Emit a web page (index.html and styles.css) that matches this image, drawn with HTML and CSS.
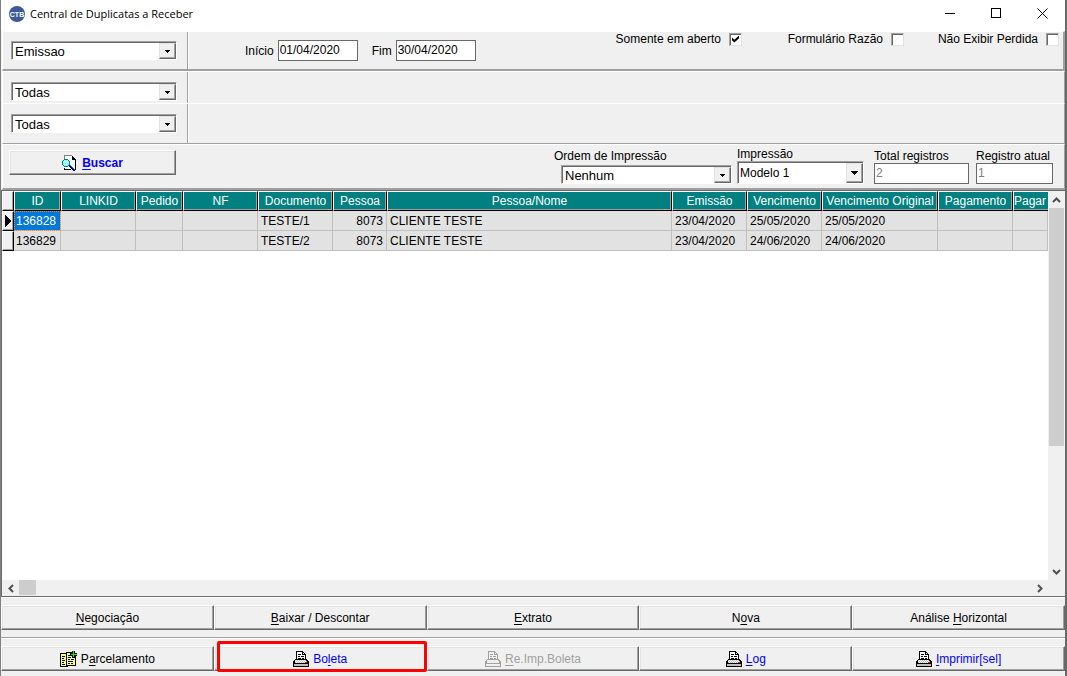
FILE: index.html
```html
<!DOCTYPE html>
<html lang="pt-BR">
<head>
    <meta charset="UTF-8">
    <meta name="viewport" content="width=device-width, initial-scale=1.0">
    <title>Central de Duplicatas a Receber</title>
    <link rel="stylesheet" href="styles.css">
</head>
<body>
    <!-- Ícones reutilizados nos botões -->
    <svg class="sprites" aria-hidden="true">
        <symbol id="printer" viewBox="0 0 16 16">
            <path class="tray" d="M2 8H14V9H15V10H16V16H0V10H1V9H2z"/>
            <path class="tray-top" d="M3 9H13V10H14V12H2V10H3z"/>
            <path class="dots" d="M2 9.500H14M3 10.500H15M2 11.500H14"/>
            <path class="tray-base" d="M1 13H15V15H1z"/>
            <path class="edge" d="M3 0H10V1H11V2H12V3H13V9H3z"/>
            <path class="paper" d="M4 1H9V4H12V8H4z"/>
            <path class="paper" d="M10 2H11V3H10z"/>
            <path class="edge" d="M5 3H8V4H5zM5 5H7V6H5zM8 5H11V6H8zM5 7H8V8H5zM9 7H11V8H9z"/>
            <path class="led" d="M12 11H14V12H12z"/>
        </symbol>
        <symbol id="arrow" viewBox="0 0 7 4">
            <path d="M0 0H7V1H6V2H5V3H4V4H3V3H2V2H1V1H0z"/>
        </symbol>
    </svg>

    <div class="window">
        <header class="titlebar">
            <svg class="logo" viewBox="0 0 16 16">
                <circle cx="8" cy="8" r="8" fill="#3b5998"/>
                <text x="8" y="11" text-anchor="middle">CTB</text>
            </svg>
            <h1>Central de Duplicatas a Receber</h1>
            <button class="win-btn" aria-label="Minimizar"><svg viewBox="0 0 11 11"><path d="M0 5.500H10"/></svg></button>
            <button class="win-btn" aria-label="Maximizar"><svg viewBox="0 0 11 11"><path d="M.5.5H9.500V9.500H.5z"/></svg></button>
            <button class="win-btn" aria-label="Fechar"><svg class="smooth" viewBox="0 0 11 11"><path d="M.5.5L10.500 10.500M10.500.5L.5 10.500"/></svg></button>
        </header>

        <section class="filter filter-date">
            <div class="filter-type">
                <div class="combo">
                    <select aria-label="Tipo de data"><option>Emissao</option></select>
                    <span class="drop"><svg><use href="#arrow"/></svg></span>
                </div>
            </div>
            <div class="period">
                <label for="inicio">Início</label>
                <input type="text" id="inicio" value="01/04/2020">
                <label for="fim" class="label-fim">Fim</label>
                <input type="text" id="fim" value="30/04/2020">
            </div>
            <div class="checks">
                <label>Somente em aberto <input type="checkbox" checked></label>
                <label>Formulário Razão <input type="checkbox"></label>
                <label>Não Exibir Perdida <input type="checkbox"></label>
            </div>
        </section>

        <section class="filter filter-client">
            <div class="filter-type">
                <div class="combo">
                    <select aria-label="Filtro 1"><option>Todas</option></select>
                    <span class="drop"><svg><use href="#arrow"/></svg></span>
                </div>
            </div>
        </section>

        <section class="filter filter-account">
            <div class="filter-type">
                <div class="combo">
                    <select aria-label="Filtro 2"><option>Todas</option></select>
                    <span class="drop"><svg><use href="#arrow"/></svg></span>
                </div>
            </div>
        </section>

        <section class="filter search">
            <button class="btn btn-search">
                <svg class="icon" viewBox="0 0 16 16">
                    <path d="M3 1H10V5H13V14H3z" fill="#fff"/>
                    <path d="M2 0H10V1H3V4H2z" fill="#808080"/>
                    <path d="M10 1H11V2H12V3H13V4H14V15H11V14H13V5H10zM2 13H3V14H9V15H2z" fill="#000"/>
                    <path d="M2 4H6V5H7V6H8V10H7V11H6V12H2V11H1V10H0V6H1V5H2z" fill="#008080"/>
                    <path d="M2 5H6V6H7V10H6V11H2V10H1V6H2z" fill="#7fffff"/>
                    <path d="M2 6H3V7H2zM4 6H5V7H4zM3 7H4V8H3zM5 7H6V8H5zM2 8H3V9H2zM4 8H5V9H4z" fill="#fff"/>
                    <path d="M7 10H9V11H10V12H11V13H12V14H13V16H11V15H10V14H9V13H8V12H7z" fill="#000080"/>
                    <path d="M8 10H9V11H10V12H11V13H12V14H13V15H12V14H11V13H10V12H9V11H8z" fill="#0080ff"/>
                </svg>
                <span><u>B</u>uscar</span>
            </button>
            <div class="field field-order">
                <label for="ordem">Ordem de Impressão</label>
                <div class="combo">
                    <select id="ordem"><option>Nenhum</option></select>
                    <span class="drop"><svg><use href="#arrow"/></svg></span>
                </div>
            </div>
            <div class="field field-model">
                <label for="impressao">Impressão</label>
                <div class="combo combo-tall">
                    <select id="impressao"><option>Modelo 1</option></select>
                    <span class="drop"><svg><use href="#arrow"/></svg></span>
                </div>
            </div>
            <div class="field field-total">
                <label for="total">Total registros</label>
                <input type="text" id="total" value="2" disabled>
            </div>
            <div class="field field-current">
                <label for="atual">Registro atual</label>
                <input type="text" id="atual" value="1" disabled>
            </div>
        </section>

        <main class="grid">
            <div class="grid-body">
                <div class="grid-view">
                    <table>
                        <colgroup>
                            <col class="c-mark"><col class="c-small"><col class="c-date"><col class="c-small">
                            <col class="c-date"><col class="c-date"><col class="c-person"><col>
                            <col class="c-date"><col class="c-date"><col class="c-original"><col class="c-date">
                            <col class="c-cut">
                        </colgroup>
                        <thead>
                            <tr>
                                <th class="mark"></th>
                                <th>ID</th>
                                <th>LINKID</th>
                                <th>Pedido</th>
                                <th>NF</th>
                                <th>Documento</th>
                                <th>Pessoa</th>
                                <th>Pessoa/Nome</th>
                                <th>Emissão</th>
                                <th>Vencimento</th>
                                <th>Vencimento Original</th>
                                <th>Pagamento</th>
                                <th class="cut">Pagar</th>
                            </tr>
                        </thead>
                        <tbody>
                            <tr>
                                <td class="mark"><svg viewBox="0 0 6 12"><path d="M0 0L6 6L0 12z"/></svg></td>
                                <td class="id selected">136828</td>
                                <td></td>
                                <td></td>
                                <td></td>
                                <td>TESTE/1</td>
                                <td class="num">8073</td>
                                <td>CLIENTE TESTE</td>
                                <td>23/04/2020</td>
                                <td>25/05/2020</td>
                                <td>25/05/2020</td>
                                <td></td>
                                <td></td>
                            </tr>
                            <tr>
                                <td class="mark"></td>
                                <td class="id">136829</td>
                                <td></td>
                                <td></td>
                                <td></td>
                                <td>TESTE/2</td>
                                <td class="num">8073</td>
                                <td>CLIENTE TESTE</td>
                                <td>23/04/2020</td>
                                <td>24/06/2020</td>
                                <td>24/06/2020</td>
                                <td></td>
                                <td></td>
                            </tr>
                        </tbody>
                    </table>
                </div>
                <div class="vscroll">
                    <button aria-label="Acima"><svg viewBox="0 0 9 6"><path d="M1 5L4.500 1.500L8 5"/></svg></button>
                    <div class="track"><div class="thumb"></div></div>
                    <button aria-label="Abaixo"><svg viewBox="0 0 9 6"><path d="M1 1L4.500 4.500L8 1"/></svg></button>
                </div>
            </div>
            <div class="hscroll">
                <button aria-label="Esquerda"><svg viewBox="0 0 6 9"><path d="M5 1L1.500 4.500L5 8"/></svg></button>
                <div class="track"><div class="thumb"></div></div>
                <button aria-label="Direita"><svg viewBox="0 0 6 9"><path d="M1 1L4.500 4.500L1 8"/></svg></button>
            </div>
        </main>

        <footer class="actions">
            <div class="action-row">
                <button class="btn"><span><u>N</u>egociação</span></button>
                <button class="btn"><span><u>B</u>aixar / Descontar</span></button>
                <button class="btn"><span><u>E</u>xtrato</span></button>
                <button class="btn"><span>N<u>o</u>va</span></button>
                <button class="btn"><span>Análise <u>H</u>orizontal</span></button>
            </div>
            <div class="action-row">
                <button class="btn">
                    <svg class="icon icon-notes" viewBox="0 0 17 16">
                        <path d="M0 2H8V16H0z" fill="#000"/>
                        <path d="M1 3H7V15H1z" fill="#ffff66"/>
                        <path d="M2 5H5V6H2zM2 7H4V8H2zM2 9H5V10H2zM2 11H4V12H2zM2 13H5V14H2z" fill="#000080"/>
                        <path d="M6 1H14V3H16V15H6z" fill="#000"/>
                        <path d="M7 2H13V4H15V14H7z" fill="#ffff66"/>
                        <path d="M8 4H10V5H8zM8 6H11V7H8zM8 8H10V9H8zM11 8H14V9H11zM8 10H13V11H8zM8 12H10V13H8zM11 12H13V13H11z" fill="#000080"/>
                        <path d="M12 0H15V2H17V5H15V7H12V5H10V2H12z" fill="#000"/>
                        <path d="M13 0H14V3H17V4H14V6H13V4H11V3H13z" fill="#00ff00"/>
                    </svg>
                    <span>P<u>a</u>rcelamento</span>
                </button>
                <button class="btn link highlight">
                    <svg class="icon"><use href="#printer"/></svg>
                    <span>Bo<u>l</u>eta</span>
                </button>
                <button class="btn" disabled>
                    <svg class="icon icon-off"><use href="#printer"/></svg>
                    <span><u>R</u>e.Imp.Boleta</span>
                </button>
                <button class="btn link">
                    <svg class="icon"><use href="#printer"/></svg>
                    <span><u>L</u>og</span>
                </button>
                <button class="btn link">
                    <svg class="icon"><use href="#printer"/></svg>
                    <span><u>I</u>mprimir[sel]</span>
                </button>
            </div>
        </footer>
    </div>
</body>
</html>
```
FILE: styles.css
```css
* {
    box-sizing: border-box;
}
body {
    margin: 0;
    background-color: #f0f0f0;
    font-family: "Liberation Sans", Arial, sans-serif;
    font-size: 12px;
    line-height: 14px;
    color: #000;
}
button, input, select {
    font: inherit;
    color: inherit;
    margin: 0;
    border-radius: 0;
}
svg {
    display: block;
    shape-rendering: crispEdges;
}
.sprites {
    position: absolute;
    width: 0;
    height: 0;
}
.window {
    display: flex;
    flex-direction: column;
    height: 100vh;
    border-left: 1px solid #808080;
    border-right: 2px solid #696969;
}

/* Barra de título */
.titlebar {
    display: flex;
    align-items: center;
    height: 31px;
    padding: 0 0 4px 8px;
    background-color: #fff;
}
.titlebar h1 {
    flex: 1;
    margin: 0 0 0 5px;
    font: 11px/16px "Open Sans", "Noto Sans", sans-serif;
}
.logo {
    width: 16px;
    height: 16px;
    shape-rendering: auto;
}
.logo text {
    font: bold 7px "Liberation Sans", Arial, sans-serif;
    fill: #fff;
}
.win-btn {
    display: flex;
    align-items: center;
    justify-content: center;
    width: 46px;
    height: 26px;
    padding: 0;
    border: none;
    background: none;
}
.win-btn svg {
    width: 11px;
    height: 11px;
    fill: none;
    stroke: #000;
}
.win-btn .smooth {
    shape-rendering: auto;
}

/* Filtros */
.filter {
    display: flex;
    margin: 0 0 0 1px;
    border: 1px solid #fff;
    border-right-color: #a0a0a0;
    border-bottom: 0;
}
.filter-type {
    width: 185px;
    padding: 9px 0 0 8px;
    border-right: 1px solid #a0a0a0;
    box-shadow: 1px 0 #fff;
}
.filter-date {
    height: 40px;
    border-right-width: 2px;
    border-bottom: 2px solid #a0a0a0;
}
.filter-client {
    height: 32px;
}
.filter-client .filter-type {
    padding-top: 10px;
}
.filter-account {
    height: 41px;
    border-bottom: 1px solid #a0a0a0;
}
.filter-account .filter-type {
    padding-top: 10px;
}
.combo {
    position: relative;
    width: 166px;
    height: 19px;
    border: 1px solid #a0a0a0;
    border-right-color: #fff;
    border-bottom-color: #fff;
    box-shadow: inset 1px 1px #696969;
    background-color: #fff;
}
.combo select {
    display: block;
    width: 100%;
    height: 17px;
    padding: 3px 20px 0 3px;
    border: none;
    background: none;
    font-size: 13px;
    line-height: 14px;
    appearance: none;
}
.drop {
    position: absolute;
    top: 1px;
    right: 0;
    bottom: 0;
    display: flex;
    align-items: center;
    justify-content: center;
    width: 17px;
    border: 1px solid #e3e3e3;
    border-right-color: #696969;
    border-bottom-color: #696969;
    box-shadow: inset -1px -1px #a0a0a0;
    background-color: #f0f0f0;
    pointer-events: none;
}
.drop svg {
    width: 5px;
    height: 3px;
}
.combo-tall {
    height: 23px;
}
.combo-tall select {
    height: 21px;
    padding: 0 20px 0 2px;
    font-size: 12px;
}
.combo-tall .drop svg {
    width: 7px;
    height: 4px;
}
input[type="text"] {
    height: 21px;
    padding: 0 1px 2px;
    border: 1px solid #696969;
    background-color: #fff;
}
input[type="text"]:disabled {
    color: #808080;
}
.period {
    display: flex;
    align-items: center;
    align-self: flex-start;
    gap: 4px;
    padding: 8px 0 0 57px;
}
.period input {
    width: 80px;
}
.label-fim {
    margin-left: 10px;
}
.checks {
    display: grid;
    grid-template-columns: 128px 162px 155px;
    align-self: flex-start;
    margin-left: auto;
    padding-right: 4px;
}
.checks label {
    display: flex;
    align-items: center;
    justify-content: flex-end;
    gap: 8px;
}
.checks input {
    display: flex;
    align-items: center;
    justify-content: center;
    width: 13px;
    height: 13px;
    border: 1px solid #a0a0a0;
    border-right-color: #e3e3e3;
    border-bottom-color: #e3e3e3;
    box-shadow: inset 1px 1px #696969;
    background-color: #fff;
    appearance: none;
}
.checks input:checked::before {
    content: "";
    width: 7px;
    height: 7px;
    background-color: #000;
    clip-path: polygon(0 30%, 35% 60%, 100% 0, 100% 38%, 35% 100%, 0 68%);
}

/* Busca e impressão */
.search {
    align-items: flex-end;
    height: 46px;
    padding: 0 11px 4px 6px;
    border-bottom: 2px solid #a0a0a0;
}
.btn {
    display: flex;
    align-items: center;
    justify-content: center;
    gap: 4px;
    padding: 0;
    border: 1px solid #fff;
    border-right-color: #696969;
    border-bottom-color: #696969;
    box-shadow: inset -1px -1px #a0a0a0, inset 1px 1px #e3e3e3;
    background-color: #f0f0f0;
}
.btn:disabled {
    color: #a0a0a0;
}
.btn u {
    text-underline-offset: 2px;
}
.btn-search {
    align-self: flex-start;
    width: 167px;
    height: 25px;
    margin: 5px auto 0 0;
    color: #0000ff;
    font-weight: bold;
}
.icon {
    width: 16px;
    height: 16px;
}
.icon-notes {
    width: 17px;
}
.field {
    display: flex;
    flex-direction: column;
}
.field-order {
    width: 178px;
}
.field-order .combo {
    width: 171px;
    margin: 2px 0 0 7px;
}
.field-model {
    width: 127px;
    margin: 0 10px 0 5px;
}
.field-model .combo {
    width: auto;
}
.field-total {
    width: 95px;
    margin-right: 7px;
}
.field-current {
    width: 77px;
}
.field label {
    white-space: nowrap;
}

/* Grade de duplicatas */
.grid {
    display: flex;
    flex: 1;
    flex-direction: column;
    min-height: 0;
    border: 1px solid #696969;
    border-right: 0;
    background-color: #fff;
}
.grid-body {
    display: flex;
    flex: 1;
    min-height: 0;
}
.grid-view {
    flex: 1;
    min-width: 0;
    overflow: hidden;
}
table {
    width: 100%;
    table-layout: fixed;
    border-collapse: separate;
    border-spacing: 0;
}
.c-mark { width: 12px; }
.c-small { width: 47px; }
.c-date { width: 75px; }
.c-person { width: 54px; }
.c-original { width: 116px; }
.c-cut { width: 35px; }
th, td {
    height: 20px;
    padding: 0;
    overflow: hidden;
    white-space: nowrap;
}
th {
    border: 1px solid #fff;
    border-right-color: #000;
    border-bottom-color: #000;
    box-shadow: inset -1px -1px #a0a0a0;
    background-color: #008080;
    color: #fff;
    font-weight: normal;
}
th.cut {
    border-right: 0;
    box-shadow: inset 0 -1px #a0a0a0;
    text-align: left;
}
td {
    padding: 0 2px 0 3px;
    border-right: 1px solid #c0c0c0;
    border-bottom: 1px solid #c0c0c0;
    background-color: #e2e2e2;
}
td.num {
    padding-right: 3px;
    text-align: right;
}
td.id {
    padding: 0 0 0 2px;
}
td.selected {
    outline: 1px dotted #ff8728;
    outline-offset: -1px;
    background-color: #0078d7;
    color: #fff;
}
.mark {
    padding: 0 0 0 2px;
    border: 1px solid #fff;
    border-right-color: #000;
    border-bottom-color: #000;
    box-shadow: inset -1px -1px #a0a0a0;
    background-color: #f0f0f0;
}
.mark svg {
    width: 6px;
    height: 12px;
}
.vscroll, .hscroll {
    display: flex;
    background-color: #f0f0f0;
}
.vscroll {
    flex-direction: column;
    width: 17px;
}
.hscroll {
    height: 16px;
    padding-right: 17px;
}
.vscroll button, .hscroll button {
    display: flex;
    align-items: center;
    justify-content: center;
    width: 17px;
    height: 17px;
    padding: 0;
    border: none;
    background: none;
}
.vscroll svg {
    width: 9px;
    height: 6px;
}
.hscroll svg {
    width: 6px;
    height: 9px;
}
.vscroll path, .hscroll path {
    fill: none;
    stroke: #505050;
    stroke-width: 2;
    shape-rendering: auto;
}
.track {
    flex: 1;
}
.thumb {
    background-color: #cdcdcd;
}
.vscroll .thumb {
    width: 15px;
    height: 67%;
    margin-left: 1px;
}
.hscroll .thumb {
    width: 17px;
    height: 15px;
}

/* Botões de ação */
.action-row {
    display: grid;
    grid-template-columns: repeat(5, 1fr);
    padding: 7px 0;
    border-top: 1px solid #fff;
}
.action-row + .action-row {
    border-top-color: #a0a0a0;
    box-shadow: inset 0 1px #fff;
    padding: 8px 0 5px;
}
.action-row .btn {
    height: 25px;
}
.action-row .link {
    color: #0000ff;
}
.highlight {
    position: relative;
}
.highlight::after {
    content: "";
    position: absolute;
    inset: -6px -1px -2px 2px;
    border: 3px solid #ff0000;
    border-radius: 2px;
}

/* Cores do ícone de impressora */
.icon {
    --edge: #000;
    --paper: #fff;
    --base: #c0c0c0;
    --led: #ff0000;
}
.icon-off {
    --edge: #a0a0a0;
    --paper: #f0f0f0;
    --base: #f0f0f0;
    --led: #f0f0f0;
}
.edge, .tray {
    fill: var(--edge);
}
.paper, .tray-top {
    fill: var(--paper);
}
.tray-base {
    fill: var(--base);
}
.dots {
    fill: none;
    stroke: var(--base);
    stroke-dasharray: 1 1;
}
.led {
    fill: var(--led);
}
```
